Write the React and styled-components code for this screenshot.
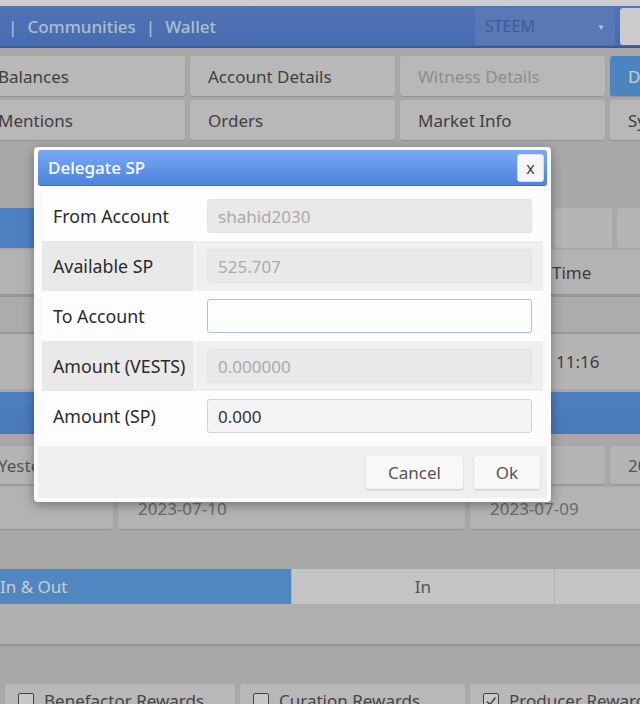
import React from "react";
import styled, { createGlobalStyle } from "styled-components";

const GlobalStyle = createGlobalStyle`
  html, body { margin: 0; padding: 0; }
  body { font-family: "Noto Sans", "Open Sans", "Liberation Sans", sans-serif; }
  * { box-sizing: border-box; }
`;

const Screen = styled.div`
  position: relative;
  width: 640px;
  height: 704px;
  overflow: hidden;
  background: #d3d3d3;
  font-family: "Noto Sans", "Open Sans", sans-serif;
`;

const Page = styled.div`
  width: 680px;
  margin-left: -20px;
  display: flex;
  flex-direction: column;
`;

const TopStrip = styled.div`
  height: 6px;
  background: #ffffff;
`;

const NavBar = styled.div`
  height: 42px;
  display: flex;
  align-items: center;
  padding-left: 28px;
  background: linear-gradient(#6591e4, #5a87dc);
  border-bottom: 2px solid #4971b9;
`;

const NavLinks = styled.div`
  flex: 1;
  display: flex;
  gap: 10px;
  color: #d3efff;
  font-size: 17px;
  font-weight: 500;
`;

const NavSelect = styled.div`
  width: 140px;
  height: 37px;
  display: flex;
  align-items: center;
  justify-content: space-between;
  padding: 0 10px;
  background: #6e97e4;
  border-radius: 3px;
  color: #4f73b8;
  font-size: 16px;
`;

const SelectArrow = styled.span`
  font-size: 8px;
  color: #f0f0f0;
`;

const NavBox = styled.div`
  width: 40px;
  height: 37px;
  margin-left: 5px;
  background: #ffffff;
  border-radius: 3px 0 0 3px;
`;

const TabGrid = styled.div`
  margin-top: 8px;
  display: grid;
  grid-template-columns: repeat(4, 205px);
  gap: 4px 5px;
`;

const Tab = styled.div`
  height: 40px;
  display: flex;
  align-items: center;
  padding-left: 18px;
  border-radius: 3px;
  background: ${(p) => (p.$active ? "#60a6f1" : "#e6e6e6")};
  color: ${(p) => (p.$active ? "#ffffff" : p.$disabled ? "#b2b2b2" : "#505050")};
  font-size: 17px;
  box-shadow: 0 1px 1px rgba(0, 0, 0, 0.12);
  white-space: nowrap;
`;

const SubTabs = styled.div`
  margin-top: 68px;
  display: flex;
  gap: 5px;
`;

const SubTab = styled.div`
  flex: none;
  width: ${(p) => p.$w}px;
  height: 40px;
  border-radius: 3px;
  background: ${(p) => (p.$active ? "#629ff1" : "#e3e3e3")};
`;

const Table = styled.div`
  margin-top: 2px;
  display: flex;
  flex-direction: column;
`;

const TableRow = styled.div`
  display: grid;
  grid-template-columns: 565px 1fr;
  align-items: center;
  height: ${(p) => p.$h}px;
  background: ${(p) => p.$bg};
  border-bottom: ${(p) => (p.$line ? `${p.$line}px solid #bdbdbd` : "none")};
  color: #4d4d4d;
  font-size: 17px;
`;

const Cell = styled.div`
  padding-left: ${(p) => p.$pad || 0}px;
  white-space: nowrap;
`;

const PanelHeader = styled.div`
  margin-top: 3px;
  height: 42px;
  background: linear-gradient(#639ff1, #5c97ea);
`;

const DayTabs = styled.div`
  margin-top: 12px;
  display: grid;
  grid-template-columns: repeat(6, 121px);
  gap: 5px;
`;

const DayTab = styled.div`
  height: 38px;
  display: flex;
  align-items: center;
  padding-left: 18px;
  border-radius: 3px;
  background: #e2e2e2;
  color: #6a6a6a;
  font-size: 17px;
  box-shadow: 0 1px 1px rgba(0, 0, 0, 0.12);
`;

const DateRow = styled.div`
  margin-top: 3px;
  display: grid;
  grid-template-columns: 133px 347px 347px;
  gap: 5px;
`;

const DateBox = styled.div`
  height: 42px;
  display: flex;
  align-items: center;
  padding-left: 20px;
  border-radius: 3px;
  background: #e0e0e0;
  color: #868686;
  font-size: 17px;
  box-shadow: 0 1px 1px rgba(0, 0, 0, 0.12);
`;

const FlowTabs = styled.div`
  margin-top: 40px;
  display: grid;
  grid-template-columns: 312px 263px 263px;
`;

const FlowTab = styled.div`
  height: 35px;
  display: flex;
  align-items: center;
  justify-content: ${(p) => (p.$active ? "flex-start" : "center")};
  padding-left: ${(p) => (p.$active ? "20px" : "0")};
  background: ${(p) => (p.$active ? "#63a9f0" : "#f6f6f6")};
  border-right: 1px solid #dcdcdc;
  color: ${(p) => (p.$active ? "#ffffff" : "#6a6a6a")};
  font-size: 17px;
`;

const FilterStrip = styled.div`
  height: 40px;
  background: #dddddd;
  box-shadow: 0 2px 2px rgba(0, 0, 0, 0.12);
`;

const CheckRow = styled.div`
  margin-top: 40px;
  display: grid;
  grid-template-columns: 20px 230px 225px 230px;
  gap: 5px;
`;

const CheckBox = styled.div`
  height: 40px;
  display: flex;
  align-items: flex-start;
  gap: 10px;
  padding: 5px 0 0 13px;
  border-radius: 3px;
  background: #e7e7e7;
  color: #555555;
  font-size: 17px;
  white-space: nowrap;
`;

const Square = styled.span`
  flex: none;
  width: 16px;
  height: 16px;
  margin-top: 4px;
  border: 1.5px solid #555;
  border-radius: 2px;
  background: #fafafa;
  display: flex;
  align-items: center;
  justify-content: center;
`;

const Overlay = styled.div`
  position: absolute;
  inset: 0;
  background: rgba(0, 0, 0, 0.2);
`;

const Dialog = styled.div`
  position: absolute;
  left: 34px;
  top: 147px;
  width: 517px;
  padding: 3px 4px 4px;
  background: #fafafa;
  border-radius: 4px;
  box-shadow: 0 3px 12px rgba(0, 0, 0, 0.35);
  display: flex;
  flex-direction: column;
`;

const TitleBar = styled.div`
  height: 36px;
  display: flex;
  align-items: center;
  justify-content: space-between;
  padding: 0 3px 0 10px;
  border-radius: 3px;
  background: linear-gradient(#78aaf6, #4d82de);
  border-bottom: 1px solid #3d70c9;
  color: #ffffff;
  font-size: 17px;
  font-weight: 500;
`;

const CloseButton = styled.div`
  width: 27px;
  height: 28px;
  display: flex;
  align-items: center;
  justify-content: center;
  border-radius: 3px;
  background: #f6f6f6;
  border: 1px solid #dcdcdc;
  color: #444;
  font-size: 16px;
  font-weight: 400;
`;

const Form = styled.div`
  margin: 5px 4px 0;
  display: flex;
  flex-direction: column;
`;

const FormRow = styled.div`
  height: 50px;
  display: grid;
  grid-template-columns: 152px 1fr;
  gap: 1px;
  background: #fdfdfd;
`;

const Label = styled.div`
  display: flex;
  align-items: center;
  padding-left: 11px;
  background: ${(p) => (p.$shade ? "#e9e9e9" : "#fdfdfd")};
  color: #2b2b2b;
  font-size: 17.8px;
  white-space: nowrap;
`;

const ValueCell = styled.div`
  display: flex;
  align-items: center;
  padding: 0 11px 0 12px;
  background: ${(p) => (p.$shade ? "#efefef" : "#fdfdfd")};
`;

const Field = styled.div`
  width: 100%;
  height: 34px;
  display: flex;
  align-items: center;
  padding-left: 10px;
  border-radius: 3px;
  font-size: 17px;
  background: ${(p) =>
    p.$variant === "disabled" ? "#e9e9e9" : p.$variant === "focus" ? "#fbfdff" : "#f4f4f4"};
  border: 1px solid
    ${(p) =>
      p.$variant === "disabled" ? "#e4e4e4" : p.$variant === "focus" ? "#a6c1e8" : "#d2d2d2"};
  color: ${(p) => (p.$variant === "disabled" ? "#ababab" : "#333333")};
`;

const Footer = styled.div`
  margin-top: 5px;
  height: 52px;
  display: flex;
  align-items: center;
  justify-content: flex-end;
  gap: 11px;
  padding-right: 7px;
  background: #efefef;
`;

const Button = styled.div`
  width: ${(p) => p.$w}px;
  height: 33px;
  display: flex;
  align-items: center;
  justify-content: center;
  border-radius: 3px;
  background: #f8f8f8;
  box-shadow: 0 1px 2px rgba(0, 0, 0, 0.18);
  color: #555555;
  font-size: 17px;
`;

const mainTabs = [
  { label: "Balances" },
  { label: "Account Details" },
  { label: "Witness Details", disabled: true },
  { label: "Delegations", active: true },
  { label: "Mentions" },
  { label: "Orders" },
  { label: "Market Info" },
  { label: "System Info" },
];

const subTabs = [260, 57, 57, 57, 57, 57, 57, 57];

const dayTabs = ["Yesterday", "", "", "", "", "2023"];

const fields = [
  { label: "From Account", value: "shahid2030", variant: "disabled" },
  { label: "Available SP", value: "525.707", variant: "disabled", shade: true },
  { label: "To Account", value: "", variant: "focus" },
  { label: "Amount (VESTS)", value: "0.000000", variant: "disabled", shade: true },
  { label: "Amount (SP)", value: "0.000", variant: "normal" },
];

const checks = [
  { label: "", hidden: true },
  { label: "Benefactor Rewards" },
  { label: "Curation Rewards" },
  { label: "Producer Rewards", checked: true },
];

export default function App() {
  return (
    <>
      <GlobalStyle />
      <Screen>
        <Page>
          <TopStrip />
          <NavBar>
            <NavLinks>
              <span>|</span>
              <span>Communities</span>
              <span>|</span>
              <span>Wallet</span>
            </NavLinks>
            <NavSelect>
              <span>STEEM</span>
              <SelectArrow>▼</SelectArrow>
            </NavSelect>
            <NavBox />
          </NavBar>

          <TabGrid>
            {mainTabs.map((t) => (
              <Tab key={t.label} $active={t.active} $disabled={t.disabled}>
                {t.label}
              </Tab>
            ))}
          </TabGrid>

          <SubTabs>
            {subTabs.map((w, i) => (
              <SubTab key={i} $w={w} $active={i === 0} />
            ))}
          </SubTabs>

          <Table>
            <TableRow $h={47} $bg="#e0e0e0" $line={3}>
              <Cell />
              <Cell $pad={7}>Time</Cell>
            </TableRow>
            <TableRow $h={37} $bg="#d7d7d7" $line={2} />
            <TableRow $h={55} $bg="#e2e2e2">
              <Cell />
              <Cell $pad={11}>11:16</Cell>
            </TableRow>
          </Table>

          <PanelHeader />

          <DayTabs>
            {dayTabs.map((d, i) => (
              <DayTab key={i}>{d}</DayTab>
            ))}
          </DayTabs>

          <DateRow>
            <DateBox />
            <DateBox>2023-07-10</DateBox>
            <DateBox>2023-07-09</DateBox>
          </DateRow>

          <FlowTabs>
            <FlowTab $active>In &amp; Out</FlowTab>
            <FlowTab>In</FlowTab>
            <FlowTab>Out</FlowTab>
          </FlowTabs>
          <FilterStrip />

          <CheckRow>
            {checks.map((c, i) => (
              <CheckBox key={i}>
                {!c.hidden && (
                  <>
                    <Square>
                      {c.checked && (
                        <svg width="12" height="12" viewBox="0 0 12 12">
                          <path d="M2 6.5 L5 9.5 L10.5 2.5" fill="none" stroke="#555" strokeWidth="1.5" />
                        </svg>
                      )}
                    </Square>
                    <span>{c.label}</span>
                  </>
                )}
              </CheckBox>
            ))}
          </CheckRow>
        </Page>

        <Overlay />

        <Dialog>
          <TitleBar>
            <span>Delegate SP</span>
            <CloseButton>x</CloseButton>
          </TitleBar>
          <Form>
            {fields.map((f) => (
              <FormRow key={f.label}>
                <Label $shade={f.shade}>{f.label}</Label>
                <ValueCell $shade={f.shade}>
                  <Field $variant={f.variant}>{f.value}</Field>
                </ValueCell>
              </FormRow>
            ))}
          </Form>
          <Footer>
            <Button $w={97}>Cancel</Button>
            <Button $w={66}>Ok</Button>
          </Footer>
        </Dialog>
      </Screen>
    </>
  );
}
